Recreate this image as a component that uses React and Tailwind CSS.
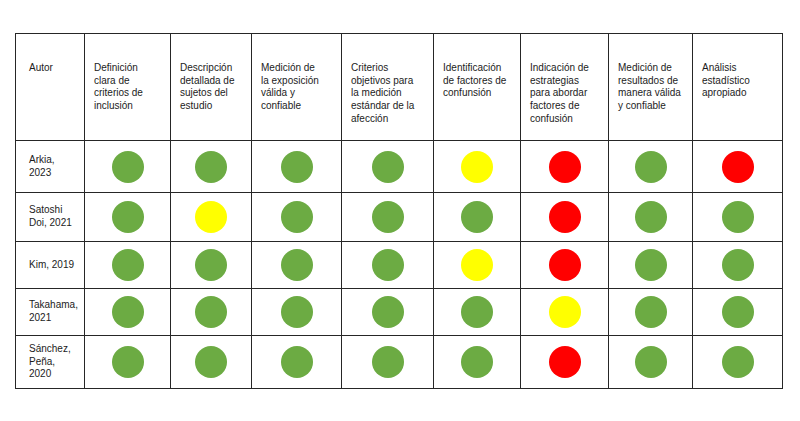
import React from "react";

const G = "bg-[#6cab43]";
const Y = "bg-[#ffff00]";
const R = "bg-[#ff0000]";

const HEADERS = [
  ["Autor"],
  ["Definición", "clara de", "criterios de", "inclusión"],
  ["Descripción", "detallada de", "sujetos del", "estudio"],
  ["Medición de", "la exposición", "válida y", "confiable"],
  ["Criterios", "objetivos para", "la medición", "estándar de la", "afección"],
  ["Identificación", "de factores de", "confunsión"],
  ["Indicación de", "estrategias", "para abordar", "factores de", "confusión"],
  ["Medición de", "resultados de", "manera válida", "y confiable"],
  ["Análisis", "estadístico", "apropiado"],
];

const ROWS = [
  { autor: ["Arkia,", "2023"], marks: [G, G, G, G, Y, R, G, R] },
  { autor: ["Satoshi", "Doi, 2021"], marks: [G, Y, G, G, G, R, G, G] },
  { autor: ["Kim, 2019"], marks: [G, G, G, G, Y, R, G, G] },
  { autor: ["Takahama,", "2021"], marks: [G, G, G, G, G, Y, G, G] },
  { autor: ["Sánchez,", "Peña,", "2020"], marks: [G, G, G, G, G, R, G, G] },
];

function Lines({ lines }) {
  return lines.map((l, i) => (
    <React.Fragment key={i}>
      {l}
      {i < lines.length - 1 && <br />}
    </React.Fragment>
  ));
}

export default function App() {
  return (
    <div
      className="w-[800px] h-[421px] bg-white pl-[15px] pt-[33px] text-[10px] leading-[12.7px] text-[#1c1c1c]"
      style={{ fontFamily: '"Liberation Sans", Arial, sans-serif' }}
    >
      <div className="inline-grid bg-[#262626] p-px gap-px grid-cols-[68px_85px_80px_89px_91px_86px_87px_83px_89px] grid-rows-[106px_51px_48px_46px_46px_52px]">
        {/* header */}
        {HEADERS.map((h, i) => (
          <div key={i} className={`bg-white pt-[28px] ${i === 0 ? "pl-[13px]" : "pl-[9px]"}`}>
            <Lines lines={h} />
          </div>
        ))}

        {/* filas */}
        {ROWS.map((r) => (
          <React.Fragment key={r.autor.join(" ")}>
            <div className="bg-white pl-[13px] flex items-center">
              <div><Lines lines={r.autor} /></div>
            </div>
            {r.marks.map((c, j) => (
              <div key={j} className="bg-white flex items-center justify-center">
                <span className={`block w-[32px] h-[32px] rounded-full ${c}`} />
              </div>
            ))}
          </React.Fragment>
        ))}
      </div>
    </div>
  );
}
